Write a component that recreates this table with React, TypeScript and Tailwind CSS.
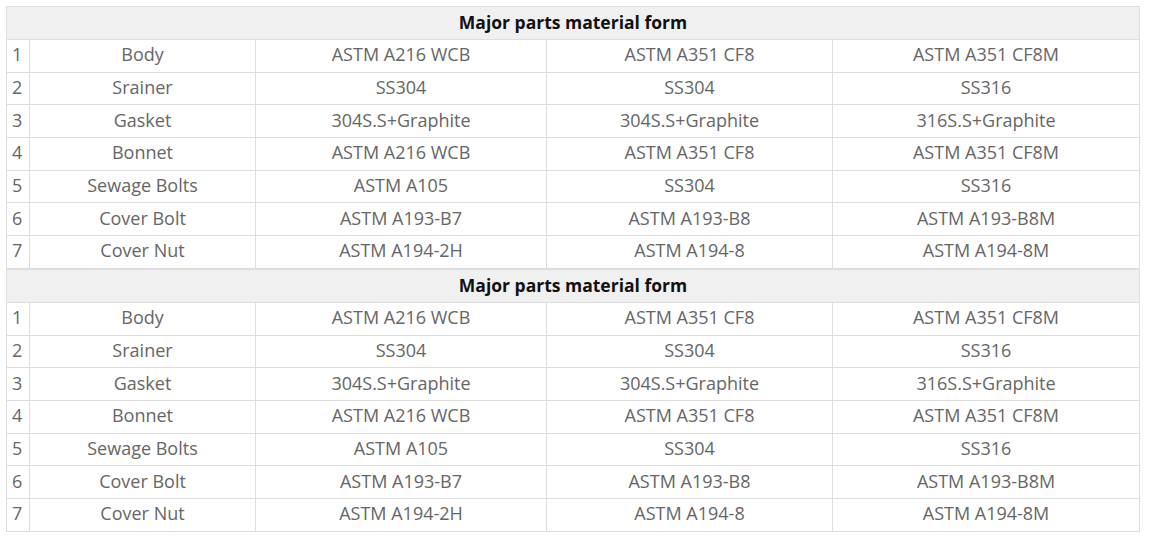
const ROWS: [string, string, string, string][] = [
  ["Body", "ASTM A216 WCB", "ASTM A351 CF8", "ASTM A351 CF8M"],
  ["Srainer", "SS304", "SS304", "SS316"],
  ["Gasket", "304S.S+Graphite", "304S.S+Graphite", "316S.S+Graphite"],
  ["Bonnet", "ASTM A216 WCB", "ASTM A351 CF8", "ASTM A351 CF8M"],
  ["Sewage Bolts", "ASTM A105", "SS304", "SS316"],
  ["Cover Bolt", "ASTM A193-B7", "ASTM A193-B8", "ASTM A193-B8M"],
  ["Cover Nut", "ASTM A194-2H", "ASTM A194-8", "ASTM A194-8M"],
];

function MaterialTable() {
  return (
    <table className="w-[1134px] table-fixed border-collapse border border-[#dddddd] text-[18px] text-[#666666]">
      <colgroup>
        <col className="w-[23px]" />
        <col className="w-[226px]" />
        <col className="w-[291px]" />
        <col className="w-[286px]" />
        <col className="w-[307px]" />
      </colgroup>
      <thead>
        <tr className="h-[33px] bg-[#f0f0f0]">
          <th colSpan={5} className="border border-[#dddddd] p-0 pb-[2px] text-center text-[17.5px] font-bold text-[#111111]">
            Major parts material form
          </th>
        </tr>
      </thead>
      <tbody>
        {ROWS.map((row, i) => (
          <tr key={i} className="h-[32.7px]">
            <td className="border border-[#dddddd] p-0 pb-[2px] pl-[5px] text-left">{i + 1}</td>
            {row.map((cell, j) => (
              <td key={j} className="border border-[#dddddd] p-0 pb-[2px] text-center">
                {cell}
              </td>
            ))}
          </tr>
        ))}
      </tbody>
    </table>
  );
}

export default function App() {
  return (
    <div className="min-h-[537px] bg-white pl-[6px] pt-[6px] font-['Open_Sans',sans-serif]">
      <MaterialTable />
      <MaterialTable />
    </div>
  );
}
